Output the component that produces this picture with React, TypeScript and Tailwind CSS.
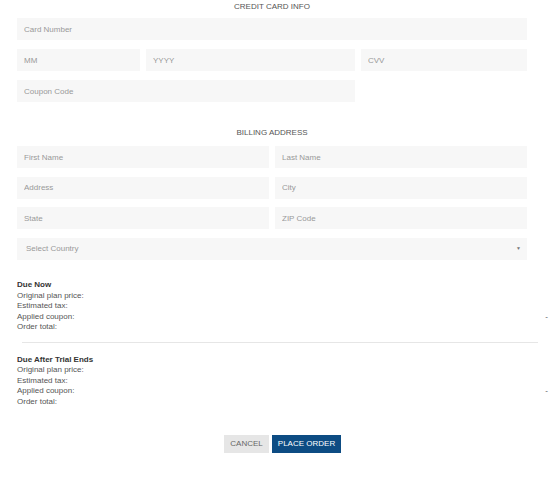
import type { ReactNode } from 'react'

type FieldProps = {
  placeholder: string
  className?: string
}

function Field({ placeholder, className = '' }: FieldProps) {
  return (
    <input
      type="text"
      placeholder={placeholder}
      className={`h-[22px] min-w-0 bg-[#f7f7f7] px-[7px] text-[8px] text-[#555] outline-none placeholder:text-[#999] ${className}`}
    />
  )
}

function SectionTitle({ children, className = '' }: { children: ReactNode; className?: string }) {
  return <h2 className={`text-center text-[8px] leading-[10px] text-[#555] ${className}`}>{children}</h2>
}

type SummaryProps = {
  title: string
}

function SummaryBlock({ title }: SummaryProps) {
  return (
    <div className="text-[8px] leading-[10.5px] text-[#555]">
      <div className="font-bold text-[#333]">{title}</div>
      <div>Original plan price:</div>
      <div>Estimated tax:</div>
      <div className="flex justify-between">
        <span>Applied coupon:</span>
        <span>-</span>
      </div>
      <div>Order total:</div>
    </div>
  )
}

export default function App() {
  return (
    <div className="w-[550px] min-h-[478px] bg-white font-['Liberation_Sans',Arial,sans-serif]">
      <div className="pl-[17px] pr-[23px]">
        <SectionTitle className="pt-[2px] mb-[6px]">CREDIT CARD INFO</SectionTitle>
        <div className="flex flex-col gap-[9px]">
          <Field placeholder="Card Number" className="w-full" />
          <div className="flex gap-[6px]">
            <Field placeholder="MM" className="w-[123px]" />
            <Field placeholder="YYYY" className="w-[209px]" />
            <Field placeholder="CVV" className="flex-1" />
          </div>
          <Field placeholder="Coupon Code" className="w-[338px]" />
        </div>

        <SectionTitle className="mt-[26px] mb-[8px]">BILLING ADDRESS</SectionTitle>
        <div className="grid grid-cols-2 gap-x-[6px] gap-y-[8.7px]">
          <Field placeholder="First Name" />
          <Field placeholder="Last Name" />
          <Field placeholder="Address" />
          <Field placeholder="City" />
          <Field placeholder="State" />
          <Field placeholder="ZIP Code" />
          <div className="col-span-2 flex h-[22px] items-center justify-between bg-[#f7f7f7] pl-[9px] pr-[6px] text-[8px] text-[#999]">
            <span>Select Country</span>
            <span className="text-[5px] text-[#777]">▼</span>
          </div>
        </div>
      </div>

      <div className="mt-[20px] pl-[17px] pr-[2px]">
        <SummaryBlock title="Due Now" />
        <div className="mt-[9px] mb-[12px] ml-[5px] mr-[10px] h-px bg-[#e6e6e6]" />
        <SummaryBlock title="Due After Trial Ends" />

        <div className="mt-[28px] flex justify-center gap-[3px]">
          <button
            type="button"
            className="h-[18px] w-[45px] bg-[#e6e6e6] text-[8px] text-[#666]"
          >
            CANCEL
          </button>
          <button
            type="button"
            className="h-[18px] w-[69px] bg-[#0d4c83] text-[8px] text-white"
          >
            PLACE ORDER
          </button>
        </div>
      </div>
    </div>
  )
}
